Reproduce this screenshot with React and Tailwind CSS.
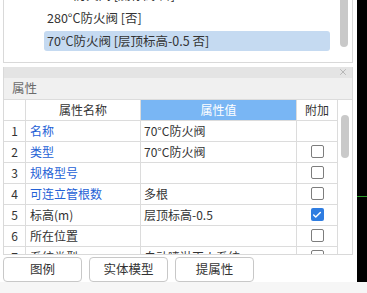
import { Check, X } from 'lucide-react';

const rows = [
  { no: 1, name: '名称', value: '70°C防火阀', link: true, box: null },
  { no: 2, name: '类型', value: '70°C防火阀', link: true, box: false },
  { no: 3, name: '规格型号', value: '', link: true, box: false },
  { no: 4, name: '可连立管根数', value: '多根', link: true, box: false },
  { no: 5, name: '标高(m)', value: '层顶标高-0.5', link: false, box: true },
  { no: 6, name: '所在位置', value: '', link: false, box: false },
  { no: 7, name: '系统类型', value: '自动喷淋灭火系统', link: false, box: false },
];

const CheckBox = ({ checked }) =>
  checked ? (
    <span className="flex h-[13px] w-[13px] items-center justify-center rounded-[2px] bg-[#2f7de1]">
      <Check size={10} strokeWidth={3.5} className="text-white" />
    </span>
  ) : (
    <span className="h-[13px] w-[13px] rounded-[2px] border border-[#7d7d7d] bg-white" />
  );

const App = () => {
  return (
    <div className="flex h-[293px] w-[367px] flex-col overflow-hidden bg-white font-['Noto_Sans_CJK_SC',sans-serif] text-[12px] text-[#333]">
      <div className="flex h-[282px]">
        <div className="flex w-[357px] flex-col pl-[3px] pr-[4px]">
          {/* Component list */}
          <div className="flex h-[63px] border-x border-b border-[#d9d9d9] bg-white">
            <div className="flex-1 overflow-hidden pl-[40px] pr-[10px]">
              <div className="-mt-[15px] flex flex-col gap-[3px] text-[12.5px]">
                <div className="flex h-[20px] items-center px-[3px]">70°C防火阀 [底标高 否]</div>
                <div className="flex h-[20px] items-center px-[3px]">280°C防火阀 [否]</div>
                <div className="flex h-[20px] items-center rounded-[3px] bg-[#c5daf1] px-[3px]">
                  70°C防火阀 [层顶标高-0.5 否]
                </div>
              </div>
            </div>
            <div className="w-[12px] pr-[3px]">
              <div className="h-[47px] w-[8px] rounded-b-full bg-[#c9c9c9]" />
            </div>
          </div>

          {/* Properties panel */}
          <div className="mt-[4px] flex h-[189px] flex-col overflow-hidden border-x border-b border-[#d9d9d9]">
            <div className="flex h-[11px] shrink-0 items-center justify-end bg-[#e4e4e4] pr-[4px]">
              <X size={10} strokeWidth={1.5} className="text-[#9a9a9a]" />
            </div>
            <div className="flex h-[22px] shrink-0 items-center border-b border-[#dcdcdc] bg-[#f0f0f0] pl-[8px] text-[12.5px] text-[#6b6b6b]">
              属性
            </div>
            <div className="flex min-h-0 flex-1">
              <div className="flex w-[333px] flex-col">
                <div className="flex h-[21px] shrink-0 border-b border-[#dcdcdc]">
                  <div className="w-[22px] border-r border-[#dcdcdc]" />
                  <div className="flex w-[115px] items-center justify-center border-r border-[#dcdcdc]">属性名称</div>
                  <div className="flex w-[156px] items-center justify-center border-r border-[#dcdcdc] bg-[#79b6f4] text-white">属性值</div>
                  <div className="flex w-[40px] items-center justify-center">附加</div>
                </div>
                {rows.map((r) => (
                  <div key={r.no} className="flex h-[21px] shrink-0 border-b border-[#dcdcdc]">
                    <div className="flex w-[22px] items-center justify-center border-r border-[#dcdcdc]">{r.no}</div>
                    <div className={`flex w-[115px] items-center border-r border-[#dcdcdc] pl-[4px] ${r.link ? 'text-[#2461d6]' : ''}`}>
                      {r.name}
                    </div>
                    <div className="flex w-[156px] items-center border-r border-[#dcdcdc] pl-[3px]">{r.value}</div>
                    <div className="flex w-[40px] items-center justify-center">
                      {r.box !== null && <CheckBox checked={r.box} />}
                    </div>
                  </div>
                ))}
              </div>
              <div className="w-[15px] border-l border-[#dcdcdc] pl-[3px] pt-[15px]">
                <div className="h-[43px] w-[8px] rounded-full bg-[#c9c9c9]" />
              </div>
            </div>
          </div>

          {/* Buttons */}
          <div className="mt-[2px] flex gap-[7px]">
            {['图例', '实体模型', '提属性'].map((b) => (
              <button
                key={b}
                className="flex h-[25px] w-[79px] items-center justify-center rounded-[4px] border border-[#c8c8c8] bg-white text-[12.5px] text-[#333]"
              >
                {b}
              </button>
            ))}
          </div>
        </div>
        <div className="w-[10px] bg-black pt-[196px]">
          <div className="h-[1px] bg-[#2a9a2a]" />
        </div>
      </div>
      <div className="flex-1 bg-[#f6f6f6]" />
    </div>
  );
};

export default App;
